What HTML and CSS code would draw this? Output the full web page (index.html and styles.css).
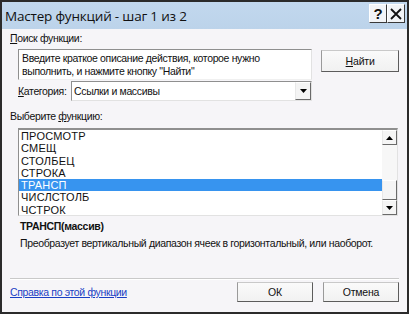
FILE: index.html
```html
<!DOCTYPE html>
<html lang="ru">
<head>
<meta charset="utf-8">
<title>Мастер функций</title>
<link rel="stylesheet" href="styles.css">
</head>
<body>
<div class="dialog">
  <div class="titlebar">
    <span class="title">Мастер функций - шаг 1 из 2</span>
    <div class="tb-buttons">
      <span class="tb-btn help">?</span>
      <span class="tb-btn close"><svg width="12" height="12" viewBox="0 0 12 12"><path d="M1 1 L11 11 M11 1 L1 11" stroke="#111" stroke-width="1.8" fill="none"/></svg></span>
    </div>
  </div>
  <div class="content">
    <div class="label search-label"><u>П</u>оиск функции:</div>
    <div class="search-row">
      <div class="textarea">Введите краткое описание действия, которое нужно<br>выполнить, и нажмите кнопку "Найти"</div>
      <button class="btn find"><u>Н</u>айти</button>
    </div>
    <div class="cat-row">
      <span class="label cat-label"><u>К</u>атегория:</span>
      <div class="select">
        <span class="sel-text">Ссылки и массивы</span>
        <span class="sel-arrow"><svg width="7" height="4" viewBox="0 0 7 4"><path d="M0 0 H7 L3.5 4 Z" fill="#000"/></svg></span>
      </div>
    </div>
    <div class="label choose-label">Выберите <u>ф</u>ункцию:</div>
    <div class="listbox">
      <ul class="items">
        <li>ПРОСМОТР</li>
        <li>СМЕЩ</li>
        <li>СТОЛБЕЦ</li>
        <li>СТРОКА</li>
        <li class="selected">ТРАНСП</li>
        <li>ЧИСЛСТОЛБ</li>
        <li>ЧСТРОК</li>
      </ul>
      <div class="scrollbar">
        <span class="sb-btn"><svg width="7" height="4" viewBox="0 0 7 4"><path d="M0 4 H7 L3.5 0 Z" fill="#000"/></svg></span>
        <span class="sb-track"><span class="sb-thumb"></span></span>
        <span class="sb-btn"><svg width="7" height="4" viewBox="0 0 7 4"><path d="M0 0 H7 L3.5 4 Z" fill="#000"/></svg></span>
      </div>
    </div>
    <div class="fn-sig">ТРАНСП(массив)</div>
    <div class="fn-desc">Преобразует вертикальный диапазон ячеек в горизонтальный, или наоборот.</div>
    <div class="separator"></div>
    <div class="footer">
      <a class="help-link" href="#">Справка по этой функции</a>
      <div class="actions">
        <button class="btn action">ОК</button>
        <button class="btn action">Отмена</button>
      </div>
    </div>
  </div>
</div>
</body>
</html>
```

FILE: styles.css
```css
* { box-sizing: border-box; }
html, body { margin: 0; padding: 0; background: #ffffff; }
body {
  font-family: "Liberation Sans", Arial, sans-serif;
  font-size: 10.5px;
  letter-spacing: -0.35px;
  color: #111;
}
.dialog {
  width: 409px;
  height: 314px;
  border: 2px solid #2b2b2b;
  background: #f6f5f8;
  display: flex;
  flex-direction: column;
}
.titlebar {
  height: 27px;
  background: linear-gradient(#c2d8ee, #bcd3ea);
  display: flex;
  align-items: center;
  justify-content: space-between;
  padding-left: 3px;
  padding-right: 2px;
}
.title {
  font-family: "Open Sans", "Liberation Sans", sans-serif;
  font-size: 13.5px;
  color: #111;
  letter-spacing: -0.2px;
}
.tb-buttons { display: flex; align-self: flex-start; margin-top: 2px; }
.tb-btn {
  width: 18px;
  height: 19px;
  display: flex;
  align-items: center;
  justify-content: center;
  background: #f2f4f7;
  border: 1px solid;
  border-color: #ffffff #3a3a3a #3a3a3a #ffffff;
  letter-spacing: 0;
}
.help { font-weight: bold; font-size: 15px; font-family: "Liberation Sans", sans-serif; }
.content {
  flex: 1;
  padding: 2px 8px 0 8px;
  display: flex;
  flex-direction: column;
}
.label { line-height: 14px; white-space: nowrap; }
.search-row {
  margin-top: 4px;
  padding-left: 8px;
  display: flex;
  align-items: flex-start;
}
.textarea {
  width: 295px;
  height: 31px;
  background: #fff;
  border: 1px solid;
  border-color: #8f8f8f #e2e2e2 #f0f0f0 #8f8f8f;
  line-height: 13px;
  padding: 2px 0 0 3px;
  white-space: nowrap;
}
.btn {
  font-family: "Liberation Sans", Arial, sans-serif;
  font-size: 10.5px;
  letter-spacing: -0.2px;
  color: #111;
  background: linear-gradient(#fafafa, #f1f1f1);
  border: 1px solid;
  border-color: #c9c9c9 #5c5c5c #5c5c5c #9a9a9a;
  padding: 0;
  margin: 0;
}
.find {
  margin-left: 9px;
  margin-top: 1px;
  width: 78px;
  height: 22px;
}
.cat-row {
  margin-top: 1px;
  padding-left: 8px;
  display: flex;
  align-items: center;
  height: 20px;
}
.cat-label { width: 53px; }
.select {
  width: 241px;
  height: 20px;
  background: #fff;
  border: 1px solid;
  border-color: #8f8f8f #e2e2e2 #e2e2e2 #8f8f8f;
  display: flex;
  align-items: center;
  justify-content: space-between;
  padding-left: 2px;
}
.sel-arrow {
  width: 16px;
  height: 18px;
  display: flex;
  align-items: center;
  justify-content: center;
  background: #f4f4f4;
  border: 1px solid;
  border-color: #ffffff #6a6a6a #6a6a6a #e8e8e8;
}
.choose-label { margin-top: 8px; }
.listbox {
  margin-top: 5px;
  margin-left: 8px;
  width: 380px;
  height: 88px;
  background: #fff;
  border: 1px solid;
  border-color: #8f8f8f #e2e2e2 #e2e2e2 #8f8f8f;
  border-top-width: 2px;
  display: flex;
}
.items {
  list-style: none;
  margin: 0;
  padding: 0;
  flex: 1;
  font-size: 11px;
  letter-spacing: 0.2px;
}
.items li {
  height: 12.3px;
  line-height: 12.3px;
  padding-left: 2px;
  white-space: nowrap;
}
.items li.selected {
  background: #3794ef;
  color: #fff;
}
.scrollbar {
  width: 15px;
  display: flex;
  flex-direction: column;
  background: #f7f7f7;
}
.sb-btn {
  height: 15px;
  display: flex;
  align-items: center;
  justify-content: center;
  background: #f5f5f5;
  border: 1px solid;
  border-color: #ffffff #6a6a6a #6a6a6a #e8e8e8;
}
.sb-track {
  flex: 1;
  display: flex;
  flex-direction: column;
  justify-content: flex-end;
}
.sb-thumb {
  height: 20px;
  background: #f5f5f5;
  border: 1px solid;
  border-color: #ffffff #6a6a6a #6a6a6a #e8e8e8;
}
.fn-sig {
  margin-top: 3px;
  padding-left: 10px;
  font-weight: bold;
  line-height: 14px;
  letter-spacing: -0.3px;
}
.fn-desc {
  margin-top: 3px;
  padding-left: 10px;
  line-height: 14px;
  white-space: nowrap;
}
.separator {
  margin-top: 28px;
  height: 2px;
  border-top: 1px solid #c9c9c9;
  border-bottom: 1px solid #ffffff;
}
.footer {
  margin-top: 2px;
  display: flex;
  justify-content: space-between;
  align-items: center;
}
.help-link { color: #1a3fc4; text-decoration: underline; }
.actions { display: flex; gap: 10px; }
.action { width: 76px; height: 20px; }
```
